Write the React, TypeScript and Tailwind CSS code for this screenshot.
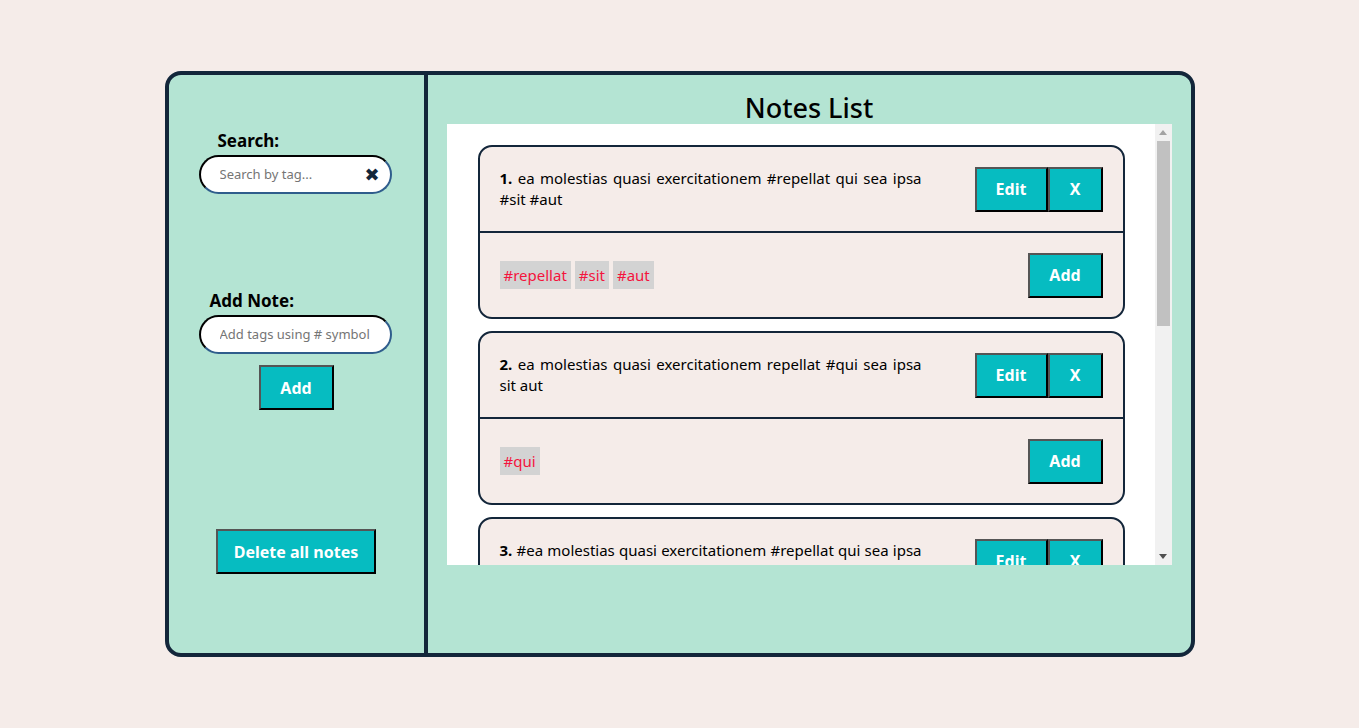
import React from 'react';

interface Note {
  id: number;
  text: string;
  tags: string[];
}

const notes: Note[] = [
  { id: 1, text: 'ea molestias quasi exercitationem #repellat qui sea ipsa #sit #aut', tags: ['#repellat', '#sit', '#aut'] },
  { id: 2, text: 'ea molestias quasi exercitationem repellat #qui sea ipsa sit aut', tags: ['#qui'] },
  { id: 3, text: '#ea molestias quasi exercitationem #repellat qui sea ipsa sit #aut', tags: ['#ea', '#repellat', '#aut'] },
];

const font = { fontFamily: '"Noto Sans", "Open Sans", sans-serif' };

// outset look of the default button border
const btn =
  'h-[45px] bg-[#06bcc1] text-white font-bold text-[16px] border-2 border-t-[#555] border-l-[#555] border-b-black border-r-black flex items-center justify-center';

const field =
  'w-[193px] h-[39px] rounded-full bg-white border-2 border-t-black border-l-black border-b-[#2f5d8c] border-r-[#2f5d8c] flex items-center pl-[19px] pr-[10px]';

function NoteCard({ note }: { note: Note }) {
  return (
    <div className="shrink-0 w-[647px] rounded-[14px] border-2 border-[#13263a] bg-[#f5ece9]">
      <div className="h-[84px] flex items-center justify-between px-5">
        <p className="w-[422px] text-[15px] leading-[21px] text-black text-justify">
          <span className="font-bold">{note.id}.</span> {note.text}
        </p>
        <div className="flex">
          <button className={`${btn} w-[73px]`}>Edit</button>
          <button className={`${btn} w-[55px]`}>X</button>
        </div>
      </div>
      <div className="border-t-2 border-[#13263a] h-[86px] flex items-center justify-between px-5">
        <div className="flex gap-1">
          {note.tags.map((t) => (
            <span key={t} className="bg-[#d3d3d3] text-[#f4143d] text-[15px] h-[28px] leading-[28px] px-1">
              {t}
            </span>
          ))}
        </div>
        <button className={`${btn} w-[75px]`}>Add</button>
      </div>
    </div>
  );
}

export default function App() {
  return (
    <div className="min-h-screen bg-[#f5ece9] flex justify-center pt-[71px]" style={font}>
      <div className="w-[1030px] h-[586px] rounded-[16px] border-4 border-[#13263a] bg-[#b4e4d3] flex overflow-hidden">
        {/* Sidebar */}
        <div className="w-[259px] shrink-0 border-r-4 border-[#13263a] flex flex-col items-center">
          <div className="w-[193px] mt-[54px] -ml-[2px]">
            <div className="ml-[19px] text-[17px] leading-[24px] font-bold text-black">Search:</div>
            <div className={`${field} mt-[2px]`}>
              <input
                className="flex-1 min-w-0 bg-transparent outline-none text-[13px] text-black placeholder:text-[#757575]"
                placeholder="Search by tag..."
              />
              <span className="text-[#13263a] text-[18px] leading-none" style={{ fontFamily: '"DejaVu Sans", sans-serif' }}>
                ✖
              </span>
            </div>
          </div>

          <div className="w-[193px] mt-[95px] -ml-[2px]">
            <div className="ml-[11px] text-[17px] leading-[24px] font-bold text-black">Add Note:</div>
            <div className={`${field} mt-[2px]`}>
              <input
                className="flex-1 min-w-0 bg-transparent outline-none text-[13px] text-black placeholder:text-[#757575]"
                placeholder="Add tags using # symbol"
              />
            </div>
          </div>
          <button className={`${btn} w-[75px] mt-[11px]`}>Add</button>

          <button className={`${btn} w-[160px] mt-[119px]`}>Delete all notes</button>
        </div>

        {/* Notes */}
        <div className="flex-1 flex flex-col items-center">
          <div className="h-[49px] flex items-end pb-[1px]">
            <h1 className="text-[27px] leading-[30px] font-medium text-black">Notes List</h1>
          </div>
          <div className="w-[725px] h-[441px] bg-white flex">
            <div className="flex-1 overflow-hidden flex flex-col gap-3 pt-[21px] pl-[31px]">
              {notes.map((n) => (
                <NoteCard key={n.id} note={n} />
              ))}
            </div>
            <div className="w-[17px] shrink-0 bg-[#f1f1f1] flex flex-col items-center">
              <div className="h-[17px] flex items-center justify-center">
                <svg width="8" height="5" viewBox="0 0 8 5"><path d="M4 0L8 5H0z" fill="#a3a3a3" /></svg>
              </div>
              <div className="w-[13px] h-[185px] bg-[#c1c1c1]" />
              <div className="flex-1" />
              <div className="h-[17px] flex items-center justify-center">
                <svg width="8" height="5" viewBox="0 0 8 5"><path d="M0 0H8L4 5z" fill="#505050" /></svg>
              </div>
            </div>
          </div>
        </div>
      </div>
    </div>
  );
}
